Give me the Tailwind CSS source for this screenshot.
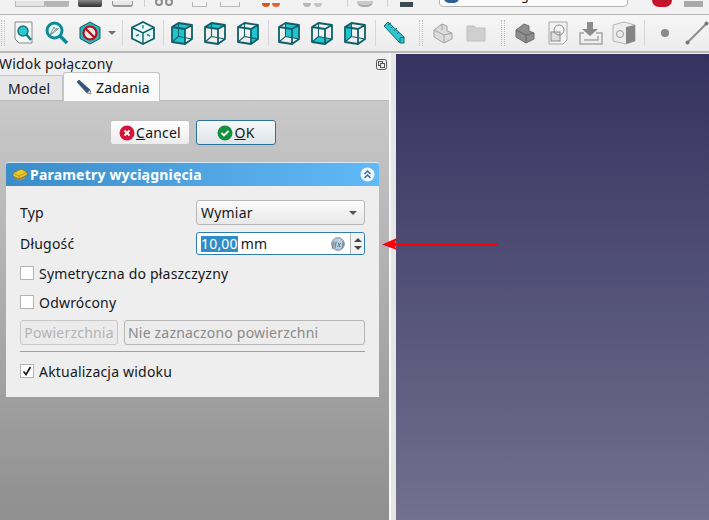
<!DOCTYPE html>
<html lang="pl">
<head>
    <meta charset="UTF-8">
    <title>FreeCAD - Parametry wyciągnięcia</title>
    <script src="https://cdn.jsdelivr.net/npm/@tailwindcss/browser@4"></script>
</head>
<body class="m-0 overflow-hidden">
<div class="relative w-[709px] h-[520px] overflow-hidden flex flex-col bg-[#efefef] font-['Noto_Sans',sans-serif] text-[14px] tracking-[0.2px] text-[#14181c]">

    <!-- clipped top toolbar -->
    <div class="h-[15px] shrink-0 flex items-end overflow-hidden pb-[7px] border-b border-[#b4b4b4] bg-[#f2f2f2]">
        <div class="ml-[15px] w-[30px] h-[6px] bg-[#e4e4e4] border-b border-x border-[#b8b8b8]"></div>
        <div class="w-[24px] h-[6px] rounded-b-[2px] bg-[#b5b5b5]"></div>
        <div class="ml-[9px] w-[24px] h-[7px] rounded-b-[2px] bg-gradient-to-b from-[#8a8a8a] to-[#2f2f2f]"></div>
        <div class="ml-[10px] w-[21px] h-[6px] rounded-b-[3px] bg-[#e8e8e8] border-b-2 border-x border-[#9a9a9a]"></div>
        <div class="ml-[11px] w-px h-[13px] bg-[#d2d2d2]"></div>
        <svg class="ml-[10px]" width="18" height="7" viewBox="0 0 18 7"><circle cx="4" cy="2" r="3" fill="none" stroke="#8c8c8c" stroke-width="2"/><circle cx="14" cy="2" r="3" fill="none" stroke="#8c8c8c" stroke-width="2"/></svg>
        <div class="ml-[19px] w-[15px] h-[5px] bg-[#f4f4f4] border-b border-x border-[#b8b8b8]"></div>
        <div class="ml-[13px] w-[20px] h-[5px] bg-[#f4f4f4] border-b border-x border-[#b8b8b8]"></div>
        <div class="ml-[22px] flex gap-[2px]"><div class="w-[8px] h-[4px] rounded-b-full bg-[#d9541e]"></div><div class="w-[8px] h-[4px] rounded-b-full bg-[#e8622a]"></div></div>
        <div class="ml-[23px] flex gap-[3px]"><div class="w-[8px] h-[4px] rounded-b-full bg-[#b5b5b5]"></div><div class="w-[8px] h-[4px] rounded-b-full bg-[#c4c4c4]"></div></div>
        <div class="ml-[25px] w-px h-[13px] bg-[#d2d2d2]"></div>
        <div class="ml-[9px] w-[16px] h-[6px] rounded-b-full bg-[#c9c9c9] border-b-2 border-[#a8a8a8]"></div>
        <div class="ml-[14px] w-px h-[13px] bg-[#d2d2d2]"></div>
        <div class="ml-[12px] w-[13px] h-[5px] bg-[#3c4a52]"></div>
        <div class="ml-[26px] w-[189px] h-[22px] shrink-0 flex items-end gap-[5px] px-[4px] pb-[2px] rounded-b-[4px] border border-[#b4b4b4] bg-[#fbfbfb]">
            <div class="w-[15px] h-[5px] mb-[1px] rounded-b-full bg-[#2b5f96]"></div>
            <span class="text-[13px] leading-[16px] translate-y-[-1px]">Part Design</span>
        </div>
        <div class="ml-[24px] w-[20px] h-[7px] rounded-b-full bg-[#c4142c]"></div>
        <div class="ml-[12px] w-[19px] h-[6px] bg-[#a9a9a9]"></div>
    </div>

    <!-- main toolbar -->
    <svg class="hidden">
        <defs>
            <symbol id="wire" viewBox="0 0 24 24">
                <path d="M2 6 8.500 2 22 4 22 18 15 23 2 21Z M2 6 15 8 22 4 M15 8V23" fill="none" stroke="#105f68" stroke-width="1.800" stroke-linejoin="round"/>
                <path d="M8.500 2V15.500L2 21 M8.500 15.500 22 18" fill="none" stroke="#105f68" stroke-width="1.100"/>
            </symbol>
        </defs>
    </svg>
    <div class="h-[38px] shrink-0 flex items-center overflow-hidden border-b-2 border-[#b9b9b9] bg-gradient-to-b from-[#f6f6f6] to-[#ececec]">
        <div class="ml-px w-[4px] h-[26px] border-x border-dotted border-[#bcbcbc]"></div>
        <button class="ml-[2px] w-[33px] flex justify-center">
            <svg width="20" height="24" viewBox="0 0 20 24"><path d="M1 1H18V22H5L1 18Z" fill="#f7f7f7" stroke="#8a8a8a"/><circle cx="9" cy="10" r="5" fill="#30c6cf" stroke="#127a83" stroke-width="1.500"/><path d="M12.500 13.500 17 19" stroke="#127a83" stroke-width="2.500"/></svg>
        </button>
        <button class="w-[33px] flex justify-center">
            <svg width="24" height="24" viewBox="0 0 24 24"><circle cx="9.500" cy="9.500" r="7.500" fill="#dff" stroke="#0e8a96" stroke-width="3"/><path d="M15 15 22 22" stroke="#0e8a96" stroke-width="3.500"/><path d="M5 14 9 6l1.500 2.500 3-1-4 3.500Z M5.500 14 12 7" fill="#fff" stroke="#8a8a8a"/></svg>
        </button>
        <button class="w-[33px] flex justify-center">
            <svg width="22" height="24" viewBox="0 0 22 24"><path d="M11 1 21 6.500V17.500L11 23 1 17.500V6.500Z" fill="#2fb3bd" stroke="#0f5c64"/><circle cx="11" cy="12" r="6.500" fill="#e9e9e9" stroke="#b5101c" stroke-width="2.200"/><path d="M6.500 7.500 15.500 16.500" stroke="#b5101c" stroke-width="2.200"/></svg>
        </button>
        <div class="ml-[2px] w-0 h-0 border-x-[4px] border-x-transparent border-t-[4px] border-t-[#6e6e6e]"></div>
        <div class="ml-[6px] w-px h-[26px] bg-[#d6d6d6]"></div>
        <button class="ml-[3px] w-[33px] flex justify-center">
            <svg width="24" height="24" viewBox="0 0 24 24"><path d="M12 1 23 6.500V17.500L12 23 1 17.500V6.500Z" fill="#e7f8f9" stroke="#105f68" stroke-width="1.800"/><path d="M1 6.500 12 12 23 6.500 M12 12V23" fill="none" stroke="#105f68" stroke-width="1.400"/><path d="M5 15l3-1.500M19 15l-3-1.500M12 4v3.500" fill="none" stroke="#1a8a94" stroke-width="1.400"/></svg>
        </button>
        <div class="ml-[4px] w-px h-[26px] bg-[#d6d6d6]"></div>
        <button class="ml-[1px] w-[33px] flex justify-center">
            <svg width="24" height="24" viewBox="0 0 24 24"><path d="M2 6 15 8V23L2 21Z M2 6 8.500 2 22 4 15 8Z" fill="#21c5d0"/><use href="#wire"/></svg>
        </button>
        <button class="w-[33px] flex justify-center">
            <svg width="24" height="24" viewBox="0 0 24 24"><path d="M2 6 8.500 2 22 4 15 8Z" fill="#21c5d0"/><use href="#wire"/></svg>
        </button>
        <button class="w-[33px] flex justify-center">
            <svg width="24" height="24" viewBox="0 0 24 24"><path d="M15 8 22 4V18L15 23Z" fill="#21c5d0"/><use href="#wire"/></svg>
        </button>
        <div class="ml-[4px] w-px h-[26px] bg-[#d6d6d6]"></div>
        <button class="ml-[3px] w-[33px] flex justify-center">
            <svg width="24" height="24" viewBox="0 0 24 24"><path d="M8.500 2 22 4V18L8.500 15.500Z" fill="#21c5d0"/><use href="#wire"/></svg>
        </button>
        <button class="w-[33px] flex justify-center">
            <svg width="24" height="24" viewBox="0 0 24 24"><path d="M2 21 8.500 15.500 22 18 15 23Z" fill="#21c5d0"/><use href="#wire"/></svg>
        </button>
        <button class="w-[33px] flex justify-center">
            <svg width="24" height="24" viewBox="0 0 24 24"><path d="M2 6 8.500 2V15.500L2 21Z" fill="#21c5d0"/><use href="#wire"/></svg>
        </button>
        <div class="ml-[4px] w-px h-[26px] bg-[#d6d6d6]"></div>
        <button class="ml-[1px] w-[33px] flex justify-center">
            <svg width="22" height="24" viewBox="0 0 22 24"><path d="M1 5 5 1 21 16V22L17 22Z" fill="#2cc6d1" stroke="#0f6a73"/><path d="M17 22V17L21 16 M5 4 8 2 M8 7l2-2 M11 10l3-3 M14 13l2-2" fill="none" stroke="#0f6a73"/></svg>
        </button>
        <div class="ml-[9px] w-[4px] h-[26px] border-x border-dotted border-[#bcbcbc]"></div>
        <button class="ml-[3px] w-[33px] flex justify-center">
            <svg width="20" height="22" viewBox="0 0 20 22"><path d="M1 8 9 2 14 4V9L19 11V17L11 21 1 15Z" fill="#dcdcdc" stroke="#a3a3a3"/><path d="M1 8 11 13V21 M11 13 19 11 M9 2V8" fill="none" stroke="#a3a3a3"/></svg>
        </button>
        <button class="w-[33px] flex justify-center">
            <svg width="20" height="18" viewBox="0 0 20 18"><path d="M1 2H8L10 4H19V17H1Z" fill="#cfcfcf" stroke="#c0c0c0"/></svg>
        </button>
        <div class="ml-[9px] w-[4px] h-[26px] border-x border-dotted border-[#bcbcbc]"></div>
        <button class="ml-[3px] w-[33px] flex justify-center">
            <svg width="20" height="22" viewBox="0 0 20 22"><path d="M1 8 9 2 14 4V9L19 11V17L11 21 1 15Z" fill="#8d8d8d" stroke="#6e6e6e"/><path d="M1 8 11 13V21 M11 13 19 11" fill="none" stroke="#666"/></svg>
        </button>
        <button class="w-[33px] flex justify-center">
            <svg width="20" height="24" viewBox="0 0 20 24"><path d="M1 1H19V19L15 23H1Z" fill="#f2f2f2" stroke="#a8a8a8"/><rect x="3" y="11" width="9" height="9" fill="#ddd" stroke="#8a8a8a"/><circle cx="11" cy="9" r="5" fill="none" stroke="#8a8a8a"/></svg>
        </button>
        <button class="w-[33px] flex justify-center">
            <svg width="24" height="24" viewBox="0 0 24 24"><path d="M8 1H14V8H19L11 15 3 8H8Z" fill="#8c8c8c"/><path d="M5 12H1V23H23V12H17 M5 19H19V15" fill="none" stroke="#a6a6a6" stroke-width="1.500"/></svg>
        </button>
        <button class="w-[33px] flex justify-center">
            <svg width="24" height="24" viewBox="0 0 24 24"><path d="M1 4 12 1 23 4V20L14 23 1 20Z" fill="#ececec" stroke="#b5b5b5"/><path d="M14 6 23 4V20L14 23Z" fill="#858585"/><circle cx="8" cy="13" r="3.500" fill="none" stroke="#9a9a9a"/></svg>
        </button>
        <div class="ml-[4px] w-px h-[26px] bg-[#d6d6d6]"></div>
        <button class="ml-[3px] w-[33px] flex justify-center">
            <div class="w-[8px] h-[8px] rounded-full bg-[#8a8a8a]"></div>
        </button>
        <button class="w-[28px] flex justify-end">
            <svg width="24" height="24" viewBox="0 0 24 24"><path d="M2 22 22 2" stroke="#8c8c8c" stroke-width="2"/><circle cx="2.500" cy="21.500" r="2" fill="#777"/><circle cx="21.500" cy="2.500" r="2" fill="#777"/></svg>
        </button>
    </div>

    <div class="flex-1 flex min-h-0">
        <!-- combined view panel -->
        <div class="w-[389px] shrink-0 flex flex-col">
            <div class="h-[20px] shrink-0 flex items-center justify-between pt-[2px] pr-[1px]">
                <span class="-ml-px leading-[18px]">Widok połączony</span>
                <svg width="11" height="11" viewBox="0 0 11 11" class="mr-[1px]"><rect x=".5" y=".5" width="10" height="10" rx="2" fill="none" stroke="#555"/><rect x="2.500" y="2.500" width="4" height="4" fill="none" stroke="#555"/><rect x="4.500" y="4.500" width="4" height="4" fill="#efefef" stroke="#555"/></svg>
            </div>
            <div class="h-[28px] shrink-0 flex items-end border-b border-[#bbbbbb]">
                <div class="w-[63px] h-[25px] flex items-center pl-[8px] bg-[#e6e6e6] border-t border-r border-[#c4c4c4]">Model</div>
                <div class="w-[97px] h-[29px] -mb-px flex items-center gap-[4px] pl-[12px] bg-[#fafafa] border border-b-0 border-[#c4c4c4] rounded-t-[3px]">
                    <svg width="16" height="16" viewBox="0 0 16 16"><path d="M1 3 3 1 14 11 15 15 11 14Z" fill="#33567e" stroke="#22364f" stroke-width=".6"/><path d="M11 14 14 11 15 15Z" fill="#d9c8a8"/></svg>
                    <span>Zadania</span>
                </div>
            </div>
            <!-- task panel -->
            <div class="flex-1 flex flex-col pl-[6px] pr-[10px] bg-gradient-to-b from-[#c9c9c9] to-[#8f8f8f]">
                <div class="mt-[19px] flex justify-center gap-[6px] pl-[1px]">
                    <button class="w-[80px] h-[25px] flex items-center justify-center gap-[1px] rounded-[3px] border border-[#c2c2c2] bg-gradient-to-b from-[#ffffff] to-[#ececec]">
                        <svg width="16" height="16" viewBox="0 0 16 16"><circle cx="8" cy="8" r="7.500" fill="#d3163a"/><path d="M5.500 5.500 10.500 10.500M10.500 5.500 5.500 10.500" stroke="#fff" stroke-width="1.800"/></svg>
                        <span><span class="underline">C</span>ancel</span>
                    </button>
                    <button class="w-[80px] h-[25px] flex items-center justify-center gap-[1px] rounded-[3px] border border-[#2b739f] bg-gradient-to-b from-[#f7f9fa] to-[#dde3e7]">
                        <svg width="16" height="16" viewBox="0 0 16 16"><circle cx="8" cy="8" r="7.500" fill="#14913c"/><path d="M4.500 8 7 10.500 11.500 6" fill="none" stroke="#fff" stroke-width="1.800"/></svg>
                        <span><span class="underline">O</span>K</span>
                    </button>
                </div>
                <section class="mt-[17px]">
                    <div class="h-[24px] flex items-center justify-between pl-[6px] pr-[4px] rounded-t-[3px] border-t border-[#d8eaf7] bg-gradient-to-r from-[#3a8dc8] to-[#62b9f8]">
                        <div class="flex items-center gap-[2px]">
                            <svg width="16" height="15" viewBox="0 0 16 15"><path d="M1 11 8 14 15 11 8 8Z" fill="#8c8c8c"/><path d="M1 6 9 2 15 5V8L7 12 1 9Z" fill="#e9c92c" stroke="#7d6a10" stroke-width=".6"/><path d="M1 6 7 9 15 5 M7 9V12" fill="none" stroke="#8c7a16" stroke-width=".6"/></svg>
                            <span class="font-bold text-white">Parametry wyciągnięcia</span>
                        </div>
                        <svg width="15" height="15" viewBox="0 0 15 15"><circle cx="7.500" cy="7.500" r="7" fill="#f1f7fc"/><path d="M4.500 7 7.500 4 10.500 7M4.500 11 7.500 8 10.500 11" fill="none" stroke="#2b6ea6" stroke-width="1.500"/></svg>
                    </div>
                    <div class="h-[211px] flex flex-col px-[14px] pt-[14px] bg-[#eeeeee]">
                        <div class="h-[25px] flex items-center">
                            <span class="w-[176px]">Typ</span>
                            <div class="flex-1 h-[25px] flex items-center justify-between pl-[4px] pr-[7px] rounded-[3px] border border-[#b6b6b6] bg-gradient-to-b from-[#fbfbfb] to-[#e8e8e8]">
                                <span>Wymiar</span>
                                <div class="w-0 h-0 border-x-[4px] border-x-transparent border-t-[4px] border-t-[#555555]"></div>
                            </div>
                        </div>
                        <div class="mt-[7px] h-[23px] flex items-center">
                            <span class="w-[176px]">Długość</span>
                            <div class="flex-1 h-[23px] flex items-center rounded-[3px] border border-[#2f7db2] bg-white">
                                <div class="flex-1 flex items-center pl-[4px] pr-[5px]">
                                    <span class="bg-[#308cc6] text-white leading-[16px]">10,00</span>
                                    <span class="ml-[3px]">mm</span>
                                    <svg class="ml-auto" width="14" height="14" viewBox="0 0 14 14"><circle cx="7" cy="7" r="6.300" fill="#bcd0e2" stroke="#6f8ba6"/><text x="7" y="10" text-anchor="middle" font-size="8" font-style="italic" fill="#2c4f74" font-family="Liberation Serif, serif">f(x)</text></svg>
                                </div>
                                <div class="w-[14px] h-full flex flex-col items-center justify-center gap-[4px] border-l border-[#b6b6b6] bg-[#f2f2f2] rounded-r-[3px]">
                                    <div class="w-0 h-0 border-x-[4px] border-x-transparent border-b-[4px] border-b-[#444444]"></div>
                                    <div class="w-0 h-0 border-x-[4px] border-x-transparent border-t-[4px] border-t-[#444444]"></div>
                                </div>
                            </div>
                        </div>
                        <label class="mt-[8px] h-[20px] flex items-center gap-[5px]">
                            <span class="w-[14px] h-[14px] border border-[#b4b4b4] bg-white"></span>
                            <span>Symetryczna do płaszczyzny</span>
                        </label>
                        <label class="mt-[9px] h-[20px] flex items-center gap-[5px]">
                            <span class="w-[14px] h-[14px] border border-[#b4b4b4] bg-white"></span>
                            <span>Odwrócony</span>
                        </label>
                        <div class="mt-[8px] h-[25px] flex gap-[6px]">
                            <button class="w-[98px] h-[25px] rounded-[3px] border border-[#c8c8c8] bg-[#ebebeb] text-[#b4b4b4]">Powierzchnia</button>
                            <div class="flex-1 h-[25px] flex items-center pl-[3px] rounded-[3px] border border-[#b6b6b6] bg-[#ececec] text-[#8a8a8a]">Nie zaznaczono powierzchni</div>
                        </div>
                        <div class="mt-[6px] h-px bg-[#9f9f9f]"></div>
                        <label class="mt-[9px] h-[20px] flex items-center gap-[5px]">
                            <span class="w-[14px] h-[14px] flex items-center justify-center border border-[#b4b4b4] bg-white">
                                <svg width="10" height="10" viewBox="0 0 10 10"><path d="M1.500 5.500 4 8.500 8.500 1" fill="none" stroke="#1a1a1a" stroke-width="1.700"/></svg>
                            </span>
                            <span>Aktualizacja widoku</span>
                        </label>
                    </div>
                </section>
            </div>
        </div>
        <!-- splitter + 3D view -->
        <div class="w-[7px] shrink-0 border-l-2 border-[#f7f7f7] bg-[#e6e6e6]"></div>
        <div class="flex-1 mt-px bg-gradient-to-b from-[#35325f] to-[#73718f]"></div>
    </div>

    <!-- annotation arrow -->
    <svg class="absolute left-[380px] top-[232px]" width="125" height="24" viewBox="0 0 125 24"><path d="M2 12.500 17 6 15 11H118V14H15L17 18Z" fill="#ff0008"/></svg>
</div>
</body>
</html>
